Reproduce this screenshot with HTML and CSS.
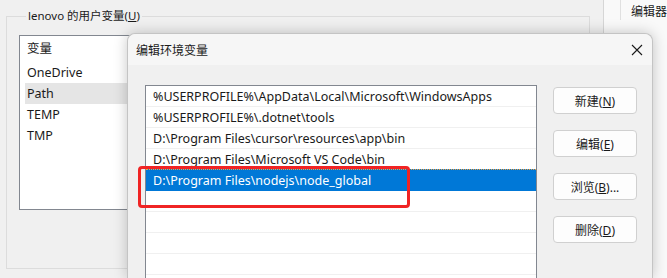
FILE: index.html
```html
<!DOCTYPE html>
<html lang="zh-CN">
<head>
    <meta charset="UTF-8">
    <title>编辑环境变量</title>
    <link rel="stylesheet" href="styles.css">
</head>
<body>
    <div class="desktop">
        <!-- background: environment variables window -->
        <main class="main-win">
            <fieldset class="group">
                <legend>lenovo 的用户变量(<u>U</u>)</legend>
                <div class="var-list">
                    <div class="var-head">变量</div>
                    <div class="var-row">OneDrive</div>
                    <div class="var-row active">Path</div>
                    <div class="var-row">TEMP</div>
                    <div class="var-row">TMP</div>
                </div>
            </fieldset>
        </main>
        <aside class="side-win">
            <div class="side-tab">编辑器</div>
        </aside>
    </div>

    <!-- dialog on top -->
    <section class="dialog">
        <header class="dialog-title">
            <span>编辑环境变量</span>
            <svg class="close" width="12" height="12" viewBox="0 0 12 12">
                <path d="M1 1 L11 11 M11 1 L1 11" stroke="#1a1a1a" stroke-width="1.1" fill="none"/>
            </svg>
        </header>
        <div class="dialog-body">
            <ul class="path-list">
                <li>%USERPROFILE%\AppData\Local\Microsoft\WindowsApps</li>
                <li>%USERPROFILE%\.dotnet\tools</li>
                <li>D:\Program Files\cursor\resources\app\bin</li>
                <li>D:\Program Files\Microsoft VS Code\bin</li>
                <li class="selected">D:\Program Files\nodejs\node_global</li>
                <li></li>
                <li></li>
                <li></li>
                <li></li>
            </ul>
            <div class="buttons">
                <button class="btn">新建(<u>N</u>)</button>
                <button class="btn">编辑(<u>E</u>)</button>
                <button class="btn">浏览(<u>B</u>)...</button>
                <button class="btn">删除(<u>D</u>)</button>
            </div>
        </div>
    </section>

    <div class="mark"></div>
</body>
</html>
```

FILE: styles.css
```css
:root{
    --ui: "Noto Sans", "Noto Sans CJK SC", sans-serif;
    --win-bg: #f0f0f0;
    --line: #dcdcdc;
    --list-border: #828790;
    --select: #0078d7;
    --text: #1a1a1a;
}
*,*::before,*::after{
    box-sizing: border-box;
    margin: 0;
    padding: 0;
}
html,body{
    width: 667px;
    height: 278px;
    overflow: hidden;
}
body{
    font-family: var(--ui);
    font-size: 12px;
    color: var(--text);
    background-color: #ececec;
    position: relative;
}
.desktop{
    display: flex;
    height: 278px;
}
.main-win{
    width: 611px;
    height: 278px;
    background-color: var(--win-bg);
    border-right: 1px solid #d6d6d6;
    padding: 8px 13px 9px 6px;
}
.group{
    border: 1px solid var(--line);
    height: 261px;
    padding: 11px 0 0 12px;
}
.group legend{
    margin-left: 7px;
    padding: 0 2px;
    line-height: 16px;
    font-size: 11.5px;
}
.var-list{
    width: 220px;
    height: 175px;
    background-color: #fff;
    border: 1px solid var(--list-border);
    padding: 1px 0 0 5px;
    font-size: 12.5px;
}
.var-head{
    height: 25px;
    line-height: 24px;
    padding-left: 2px;
}
.var-row{
    height: 21px;
    line-height: 21px;
    padding-left: 2px;
}
.var-row.active{
    background-color: #e5e5e5;
}
.side-win{
    flex: 1;
    background-color: #f9f9f9;
    padding-left: 16px;
}
.side-tab{
    border-left: 1px solid #e0e0e0;
    height: 20px;
    padding: 3px 0 0 10px;
    line-height: 18px;
    white-space: nowrap;
    overflow: hidden;
}

/* dialog */
.dialog{
    position: absolute;
    left: 127px;
    top: 33px;
    width: 526px;
    height: 245px;
    background-color: var(--win-bg);
    border: 1px solid #c4c4c4;
    border-bottom: none;
    border-radius: 8px 8px 0 0;
    box-shadow: 0 0 14px rgba(0,0,0,0.22);
}
.dialog-title{
    height: 31px;
    background-color: #f6f6f6;
    border-radius: 8px 8px 0 0;
    display: flex;
    align-items: center;
    justify-content: space-between;
    padding: 0 9px 0 8px;
}
.dialog-body{
    display: flex;
    gap: 16px;
    padding: 20px 14px 0 17px;
}
.path-list{
    list-style: none;
    width: 392px;
    height: 194px;
    overflow: hidden;
    background-color: #fff;
    border: 1px solid var(--list-border);
    border-bottom: none;
    font-size: 12.5px;
}
.path-list li{
    height: 21px;
    line-height: 20px;
    padding: 1px 0 0 7px;
    border-bottom: 1px solid #f0f0f0;
    white-space: nowrap;
}
.path-list li.selected{
    background-color: var(--select);
    color: #fff;
    border-top: 1px dotted #f0a040;
    margin-top: -1px;
    height: 22px;
    border-bottom-color: var(--select);
}
.buttons{
    display: flex;
    flex-direction: column;
    gap: 16px;
    padding-top: 2px;
}
.btn{
    width: 84px;
    height: 27px;
    font-family: var(--ui);
    font-size: 12px;
    color: var(--text);
    background-color: #fdfdfd;
    border: 1px solid #d0d0d0;
    border-radius: 4px;
}

/* red annotation box */
.mark{
    position: absolute;
    left: 138px;
    top: 166px;
    width: 272px;
    height: 42px;
    border: 3px solid #f02424;
    border-radius: 4px;
}
```
